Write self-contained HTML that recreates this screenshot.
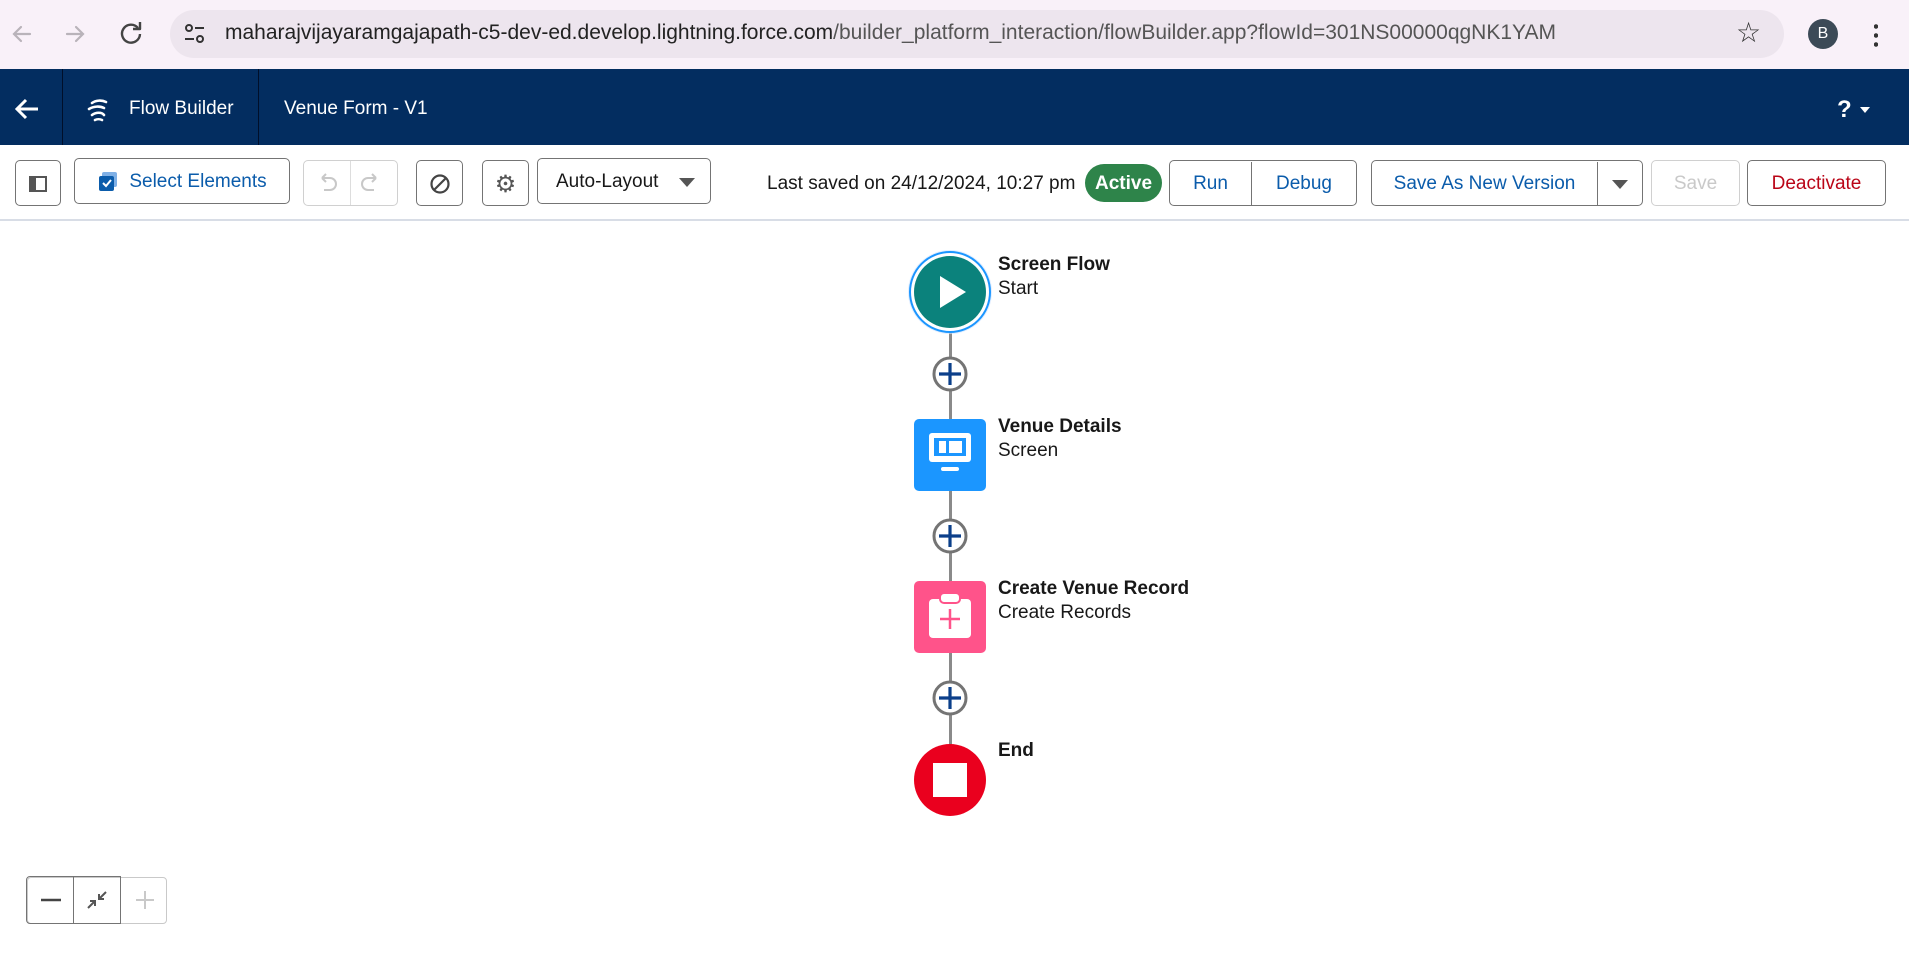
<!DOCTYPE html>
<html><head><meta charset="utf-8"><style>
*{box-sizing:border-box;margin:0;padding:0}
body{width:1909px;height:957px;overflow:hidden;background:#fff;font-family:"Liberation Sans",Arial,sans-serif;position:relative}
.abs{position:absolute}
.chrome{left:0;top:0;width:1909px;height:69px;background:#f9f1f9}
.url{left:170px;top:10px;width:1614px;height:48px;border-radius:24px;background:#ede5ee}
.hdr{left:0;top:69px;width:1909px;height:76px;background:#032d60;color:#fff}
.tb{left:0;top:145px;width:1909px;height:76px;border-bottom:2px solid #d8dde6;background:#fff}
.btn{position:absolute;border:1px solid #747474;border-radius:5px;background:#fff;font-size:19px;display:flex;align-items:center;justify-content:center;color:#0b5cab;padding-top:2px}
.lbl{position:absolute;left:998px;font-size:19px;color:#181818;line-height:24px}
.lbl b{font-weight:bold}
.line{position:absolute;left:949px;width:3px;background:#8a8a8a}
</style></head><body>
<div class="abs chrome"></div>
<svg class="abs" style="left:0;top:0" width="1909" height="69">
<g stroke="#b9b3ba" stroke-width="2.2" fill="none" stroke-linecap="round"><path d="M30 34H14M21 27l-7 7 7 7"/><path d="M67 34h16M76 27l7 7-7 7"/></g>
<g stroke="#444" stroke-width="2.4" fill="none"><path d="M138 28a9 9 0 1 0 2 6"/><path d="M140 22v7h-7" stroke-linejoin="round"/></g>
</svg>
<div class="abs url"></div>
<svg class="abs" style="left:182px;top:22px" width="26" height="24"><g stroke="#333" stroke-width="2" fill="none"><circle cx="7" cy="6" r="3"/><path d="M13 6h9M3 17h9"/><circle cx="18" cy="17" r="3"/></g></svg>
<div class="abs" style="left:225px;top:21px;font-size:21px;color:#222">maharajvijayaramgajapath-c5-dev-ed.develop.lightning.force.com<span style="color:#555">/builder_platform_interaction/flowBuilder.app?flowId=301NS00000qgNK1YAM</span></div>
<div class="abs" style="left:1736px;top:16px;font-size:28px;color:#333">☆</div>
<div class="abs" style="left:1808px;top:19px;width:30px;height:30px;border-radius:50%;background:#3c4a57;color:#fff;font-size:16px;text-align:center;line-height:30px">B</div>
<div class="abs" style="left:1874px;top:22px;width:4px;height:26px;background:radial-gradient(circle,#333 2px,transparent 2.5px) 0 0/4px 9px"></div>

<div class="abs hdr">
<svg class="abs" style="left:14px;top:28px" width="26" height="24"><path d="M24 12H4M12 3l-9 9 9 9" stroke="#fff" stroke-width="3" fill="none"/></svg>
<div class="abs" style="left:62px;top:0;width:1px;height:76px;background:#000f2a"></div>
<svg class="abs" style="left:86px;top:29px" width="24" height="24"><g stroke="#fff" stroke-width="2.6" fill="none" stroke-linecap="round"><path d="M6 5c4-3 10-3 14-1"/><path d="M3 11c5-3 11-3 15-1"/><path d="M6 17c4-3 10-3 12 0"/><path d="M9 22c2-1 5-1 7 0"/></g></svg>
<div class="abs" style="left:129px;top:29px;font-size:19px">Flow Builder</div>
<div class="abs" style="left:258px;top:0;width:1px;height:76px;background:#000f2a"></div>
<div class="abs" style="left:284px;top:29px;font-size:19px">Venue Form - V1</div>
<div class="abs" style="left:1837px;top:27px;font-size:24px;font-weight:bold">?</div>
<div class="abs" style="left:1860px;top:38px;width:0;height:0;border-left:5px solid transparent;border-right:5px solid transparent;border-top:6px solid #fff"></div>
</div>

<div class="abs tb"></div>
<div class="btn" style="left:15px;top:160px;width:46px;height:46px"><svg width="18" height="16"><rect x="1" y="1" width="16" height="14" stroke="#555" stroke-width="2" fill="none"/><rect x="1" y="1" width="6" height="14" fill="#555"/></svg></div>
<div class="btn" style="left:74px;top:158px;width:216px;height:46px"><svg width="22" height="22" style="margin-right:10px"><rect x="5" y="1" width="15" height="15" rx="2" fill="#7fb0e6"/><rect x="2" y="5" width="15" height="15" rx="2" fill="#0b5cab"/><path d="M6 12l3 3 5-6" stroke="#fff" stroke-width="2" fill="none"/></svg>Select Elements</div>
<div class="btn" style="left:303px;top:160px;width:95px;height:46px;border-color:#d0d0d0"><div style="position:absolute;left:46px;top:0;width:1px;height:44px;background:#ddd"></div>
<svg class="abs" style="left:12px;top:11px" width="70" height="22"><g stroke="#c8c8c8" stroke-width="2" fill="none"><path d="M6 6h8a6 6 0 0 1 0 12H8M6 6l4-4M6 6l4 4"/><path d="M60 6h-8a6 6 0 0 0 0 12h6M60 6l-4-4M60 6l-4 4"/></g></svg></div>
<div class="btn" style="left:416px;top:160px;width:47px;height:46px"><svg width="22" height="22"><circle cx="11" cy="11" r="8.5" stroke="#444" stroke-width="2.2" fill="none"/><path d="M5 17L17 5" stroke="#444" stroke-width="2.2"/></svg></div>
<div class="btn" style="left:482px;top:160px;width:47px;height:46px;color:#555;font-size:24px">⚙</div>
<div class="btn" style="left:537px;top:158px;width:174px;height:46px;color:#181818;justify-content:flex-start;padding-left:18px">Auto-Layout<div style="position:absolute;right:15px;top:19px;border-left:8px solid transparent;border-right:8px solid transparent;border-top:9px solid #555"></div></div>
<div class="abs" style="left:767px;top:173px;font-size:19px;color:#181818">Last saved on 24/12/2024, 10:27 pm</div>
<div class="abs" style="left:1085px;top:164px;width:77px;height:38px;border-radius:19px;background:#2e844a;color:#fff;font-weight:bold;font-size:19px;text-align:center;line-height:40px">Active</div>
<div class="btn" style="left:1169px;top:160px;width:188px;height:46px"><span style="width:81px;text-align:center">Run</span><span style="width:1px;height:44px;background:#747474"></span><span style="flex:1;text-align:center">Debug</span></div>
<div class="btn" style="left:1371px;top:160px;width:272px;height:46px"><span style="width:225px;text-align:center">Save As New Version</span><span style="width:1px;height:44px;background:#747474"></span><span style="flex:1;display:flex;justify-content:center"><i style="border-left:8px solid transparent;border-right:8px solid transparent;border-top:9px solid #555"></i></span></div>
<div class="btn" style="left:1651px;top:160px;width:89px;height:46px;border-color:#d0d0d0;color:#c9c9c9">Save</div>
<div class="btn" style="left:1747px;top:160px;width:139px;height:46px;color:#ba0517">Deactivate</div>

<div class="line" style="top:330px;height:420px"></div>
<svg class="abs" style="left:900px;top:240px" width="100" height="100"><circle cx="50" cy="52" r="42" fill="#cfe3ff" opacity=".6"/><circle cx="50" cy="52" r="40" fill="#fff" stroke="#1b96ff" stroke-width="2"/><circle cx="50" cy="52" r="36" fill="#0b827c"/><path d="M40 36v32l26-16z" fill="#fff"/></svg>
<svg class="abs" style="left:930px;top:354px" width="40" height="400">
<g fill="#fff" stroke="#747474" stroke-width="3"><circle cx="20" cy="20" r="16"/><circle cx="20" cy="182" r="16"/><circle cx="20" cy="344" r="16"/></g>
<g stroke="#0b3f8a" stroke-width="3.2"><path d="M20 9v22M9 20h22M20 171v22M9 182h22M20 333v22M9 344h22"/></g></svg>
<div class="abs" style="left:914px;top:419px;width:72px;height:72px;border-radius:5px;background:#1b96ff"></div>
<svg class="abs" style="left:914px;top:419px" width="72" height="72"><rect x="15" y="14" width="42" height="29" rx="3" fill="#fff"/><rect x="20" y="19" width="32" height="18" fill="#1b96ff"/><rect x="25" y="22" width="7" height="12" fill="#fff"/><rect x="35" y="22" width="13" height="12" fill="#fff"/><rect x="27" y="48" width="18" height="4" rx="2" fill="#fff"/></svg>
<div class="abs" style="left:914px;top:581px;width:72px;height:72px;border-radius:5px;background:#ff538a"></div>
<svg class="abs" style="left:914px;top:581px" width="72" height="72"><rect x="15" y="18" width="42" height="39" rx="4" fill="#fff"/><rect x="26" y="12" width="20" height="10" rx="4" fill="#fff" stroke="#ff538a" stroke-width="2"/><path d="M36 28v20M26 38h20" stroke="#ff538a" stroke-width="2.5"/></svg>
<svg class="abs" style="left:912px;top:742px" width="76" height="76"><circle cx="38" cy="38" r="36" fill="#ea001e"/><rect x="21" y="21" width="34" height="34" fill="#fff"/></svg>

<div class="lbl" style="top:253px"><b>Screen Flow</b><br>Start</div>
<div class="lbl" style="top:415px"><b>Venue Details</b><br>Screen</div>
<div class="lbl" style="top:577px"><b>Create Venue Record</b><br>Create Records</div>
<div class="lbl" style="top:739px"><b>End</b></div>

<div class="abs" style="left:27px;top:877px;width:140px;height:47px;border:1px solid #c9c9c9;border-radius:4px"></div>
<div class="abs" style="left:26px;top:876px;width:48px;height:48px;border:1px solid #747474;border-radius:4px 0 0 4px"></div>
<div class="abs" style="left:73px;top:876px;width:48px;height:48px;border:1px solid #747474"></div>
<svg class="abs" style="left:26px;top:876px" width="141" height="48"><path d="M15 24h20" stroke="#444" stroke-width="2.5"/><g stroke="#555" stroke-width="2" fill="none"><path d="M80 16l-7 7M73 18v5h5M62 32l7-7M64 25h5v5"/></g><path d="M110 24h18M119 15v18" stroke="#c9c9c9" stroke-width="2"/></svg>
</body></html>
